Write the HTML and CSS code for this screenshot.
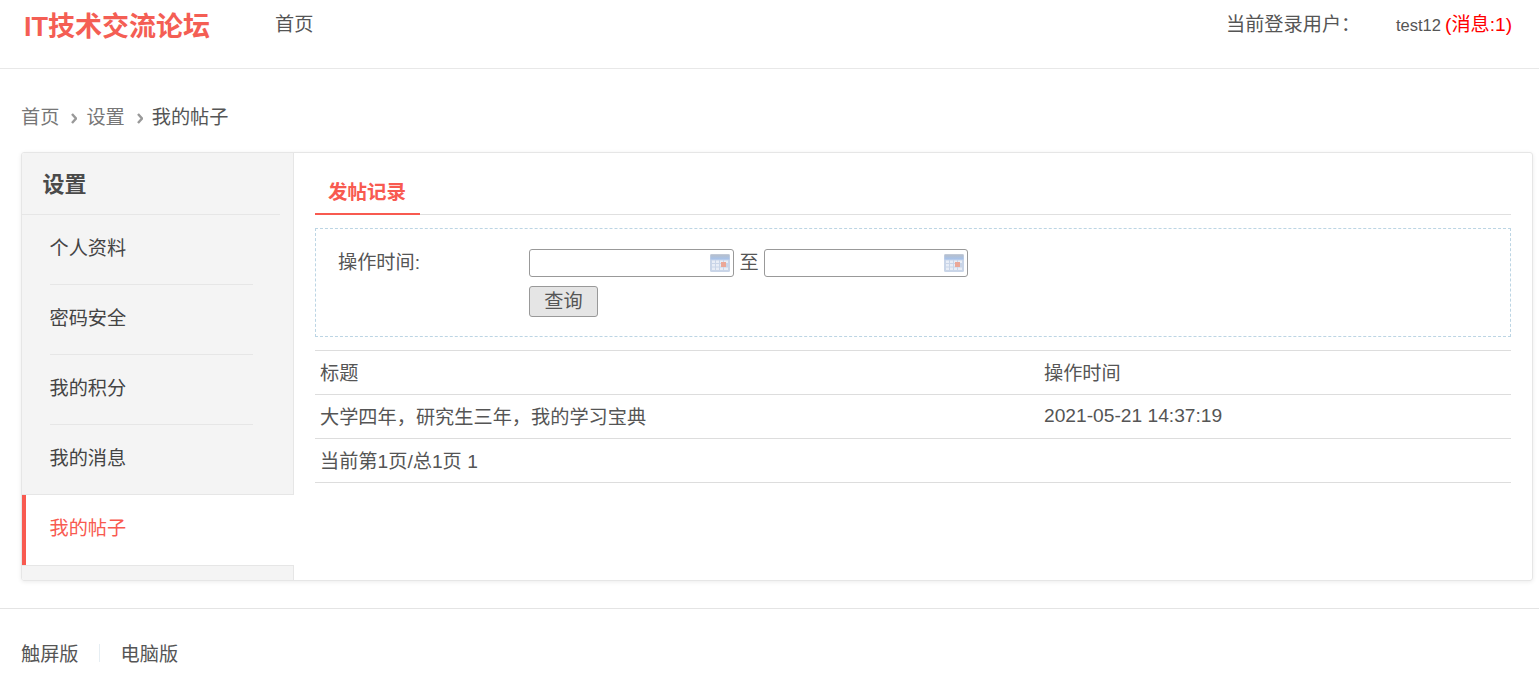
FILE: index.html
```html
<!DOCTYPE html>
<html lang="zh-CN">
<head>
<meta charset="utf-8">
<title>我的帖子</title>
<link rel="stylesheet" href="styles.css">
</head>
<body>
<svg class="defs" width="0" height="0" aria-hidden="true">
  <defs>
    <linearGradient id="calTop" x1="0" y1="0" x2="0" y2="1">
      <stop offset="0" stop-color="#b9bfc9"/>
      <stop offset="1" stop-color="#a4c2ee"/>
    </linearGradient>
  </defs>
  <symbol id="cal" viewBox="0 0 20 18">
    <rect x="0" y="0" width="20" height="18" rx="1.500" fill="#c9d5e8"/>
    <rect x="0.500" y="0.500" width="19" height="5" fill="url(#calTop)"/>
    <g fill="#e8edf6">
      <rect x="2" y="6.500" width="3" height="2.500"/><rect x="6" y="6.500" width="3" height="2.500"/><rect x="10" y="6.500" width="3" height="2.500"/><rect x="14" y="6.500" width="4" height="2.500"/>
      <rect x="2" y="10" width="3" height="2.500"/><rect x="6" y="10" width="3" height="2.500"/><rect x="10" y="10" width="3" height="2.500"/>
      <rect x="2" y="13.500" width="3" height="2.500"/><rect x="6" y="13.500" width="3" height="2.500"/><rect x="10" y="13.500" width="3" height="2.500"/><rect x="14" y="13.500" width="4" height="2.500"/>
    </g>
    <rect x="11" y="8" width="5" height="5" fill="#eba797"/>
  </symbol>
</svg>

<header class="topbar">
  <a class="logo">IT技术交流论坛</a>
  <nav class="mainnav"><a>首页</a></nav>
  <div class="userinfo">
    <span class="userlabel">当前登录用户：</span>
    <span class="username">test12</span>
    <span class="msg">(消息:1)</span>
  </div>
</header>

<nav class="crumbs">
  <a>首页</a>
  <svg class="chev" viewBox="0 0 6 11" width="6" height="11"><path d="M1 1l4 4.500-4 4.500" fill="none" stroke="#999" stroke-width="2.400"/></svg>
  <a>设置</a>
  <svg class="chev" viewBox="0 0 6 11" width="6" height="11"><path d="M1 1l4 4.500-4 4.500" fill="none" stroke="#999" stroke-width="2.400"/></svg>
  <span class="crumb-now">我的帖子</span>
</nav>

<main class="card">
  <aside class="side">
    <h2 class="side-title">设置</h2>
    <ul class="side-list">
      <li class="side-item">个人资料</li>
      <li class="side-item">密码安全</li>
      <li class="side-item">我的积分</li>
      <li class="side-item side-last">我的消息</li>
      <li class="side-item side-active">我的帖子</li>
    </ul>
  </aside>
  <section class="content">
    <div class="tabs"><span class="tab">发帖记录</span></div>
    <form class="filter">
      <label class="filter-label">操作时间:</label>
      <div class="filter-fields">
        <div class="dates">
          <span class="date"><svg class="cal"><use href="#cal"/></svg></span>
          <span class="to">至</span>
          <span class="date date2"><svg class="cal"><use href="#cal"/></svg></span>
        </div>
        <button type="button" class="query">查询</button>
      </div>
    </form>
    <div class="table">
      <div class="row row-head"><div class="c1">标题</div><div class="c2">操作时间</div></div>
      <div class="row"><div class="c1">大学四年，研究生三年，我的学习宝典</div><div class="c2 time">2021-05-21 14:37:19</div></div>
      <div class="row"><div class="c1">当前第1页/总1页 1</div></div>
    </div>
  </section>
</main>

<footer class="foot">
  <a>触屏版</a><i class="sep"></i><a>电脑版</a>
</footer>
</body>
</html>
```

FILE: styles.css
```css
* { box-sizing: border-box; }
html, body { margin: 0; padding: 0; }
body {
  background: #fff;
  color: #555;
  font-family: "Liberation Sans", "Noto Sans CJK SC", sans-serif;
  font-size: 19.2px;
  overflow: hidden;
}
.defs { position: absolute; }

.topbar {
  height: 69px;
  border-bottom: 1px solid #e8e8e8;
  display: flex;
  padding: 0 26px 0 24px;
}
.logo {
  width: 251px;
  font-size: 27px;
  font-weight: 700;
  color: #f45e54;
  line-height: 55px;
  white-space: nowrap;
}
.mainnav { line-height: 49px; color: #555; }
.userinfo {
  margin-left: auto;
  display: flex;
  align-items: baseline;
  line-height: 50px;
  white-space: nowrap;
}
.userlabel { width: 170px; }
.username { font-size: 16.500px; width: 49px; }
.msg { color: #f00; width: 68px; }

.crumbs {
  display: flex;
  align-items: center;
  height: 30px;
  margin: 32px 0 0;
  padding-left: 21px;
  color: #777;
}
.chev { margin: 4px 9px 0 12px; }
.crumb-now { color: #555; }

.card {
  display: flex;
  width: 1512px;
  height: 429px;
  margin: 21px 0 0 21px;
  border: 1px solid #e6e6e6;
  border-radius: 3px;
  box-shadow: 0 1px 4px rgba(0, 0, 0, .08);
  overflow: hidden;
}
.side {
  width: 272px;
  flex: none;
  background: #f4f4f4;
  border-right: 1px solid #e6e6e6;
}
.side-title {
  margin: 0 13px 0 0;
  height: 62px;
  padding-left: 20.500px;
  font-size: 22px;
  font-weight: 700;
  line-height: 63px;
  color: #4a4a4a;
  border-bottom: 1px solid #e6e6e6;
}
.side-list { list-style: none; margin: 0; padding: 0; }
.side-item {
  height: 70px;
  line-height: 68px;
  padding-left: 27.500px;
  color: #444;
  position: relative;
}
.side-item::after {
  content: "";
  position: absolute;
  left: 28px;
  right: 40px;
  bottom: 0;
  height: 1px;
  background: #e6e6e6;
}
.side-last::after { display: none; }
.side-active {
  margin-right: -1px;
  background: #fff;
  color: #f85a50;
  border-left: 4px solid #f85a50;
  padding-left: 23.500px;
  box-shadow: 0 -1px 0 #e6e6e6, 0 1px 0 #e6e6e6;
}
.side-active::after { display: none; }

.content {
  flex: 1;
  min-width: 0;
  padding: 0 21px;
}
.tabs {
  height: 62px;
  border-bottom: 1px solid #e0e0e0;
}
.tab {
  display: block;
  width: 105px;
  height: 62px;
  padding: 21px 0 0 13px;
  font-size: 19.500px;
  font-weight: 700;
  line-height: 36px;
  color: #f85a50;
  border-bottom: 2px solid #f85a50;
}
.filter {
  display: flex;
  height: 109px;
  margin-top: 13px;
  padding: 20px 0 0 22px;
  border: 1px dashed #bcd5e4;
}
.filter-label { width: 191px; line-height: 28px; flex: none; }
.filter-fields { display: flex; flex-direction: column; align-items: flex-start; gap: 9px; }
.dates { display: flex; align-items: center; }
.date {
  width: 205px;
  height: 28px;
  display: flex;
  align-items: center;
  justify-content: flex-end;
  padding-right: 3px;
  background: #fff;
  border: 1px solid #999;
  border-radius: 3px;
}
.date2 { width: 204px; }
.cal { width: 20px; height: 18px; }
.to { width: 30px; text-align: center; line-height: 24px; }
.query {
  width: 69px;
  height: 31px;
  padding: 0;
  font: inherit;
  color: #555;
  line-height: 27px;
  background: #e5e5e5;
  border: 1px solid #999;
  border-radius: 3px;
}
.table { margin-top: 13px; border-top: 1px solid #ddd; }
.row {
  display: flex;
  height: 44px;
  line-height: 45px;
  border-bottom: 1px solid #ddd;
}
.row-head { line-height: 46px; }
.c1 { width: 724px; padding-left: 5px; flex: none; color: #555; }
.c2 { padding-left: 5px; }
.time { line-height: 42px; }

.foot {
  margin-top: 27px;
  height: 86px;
  padding: 3px 0 0 21px;
  border-top: 1px solid #e4e4e4;
  display: flex;
  align-items: center;
  color: #555;
}
.sep {
  width: 1px;
  height: 18px;
  margin: 0 21px 0 20px;
  background: #e6eef3;
}
```
